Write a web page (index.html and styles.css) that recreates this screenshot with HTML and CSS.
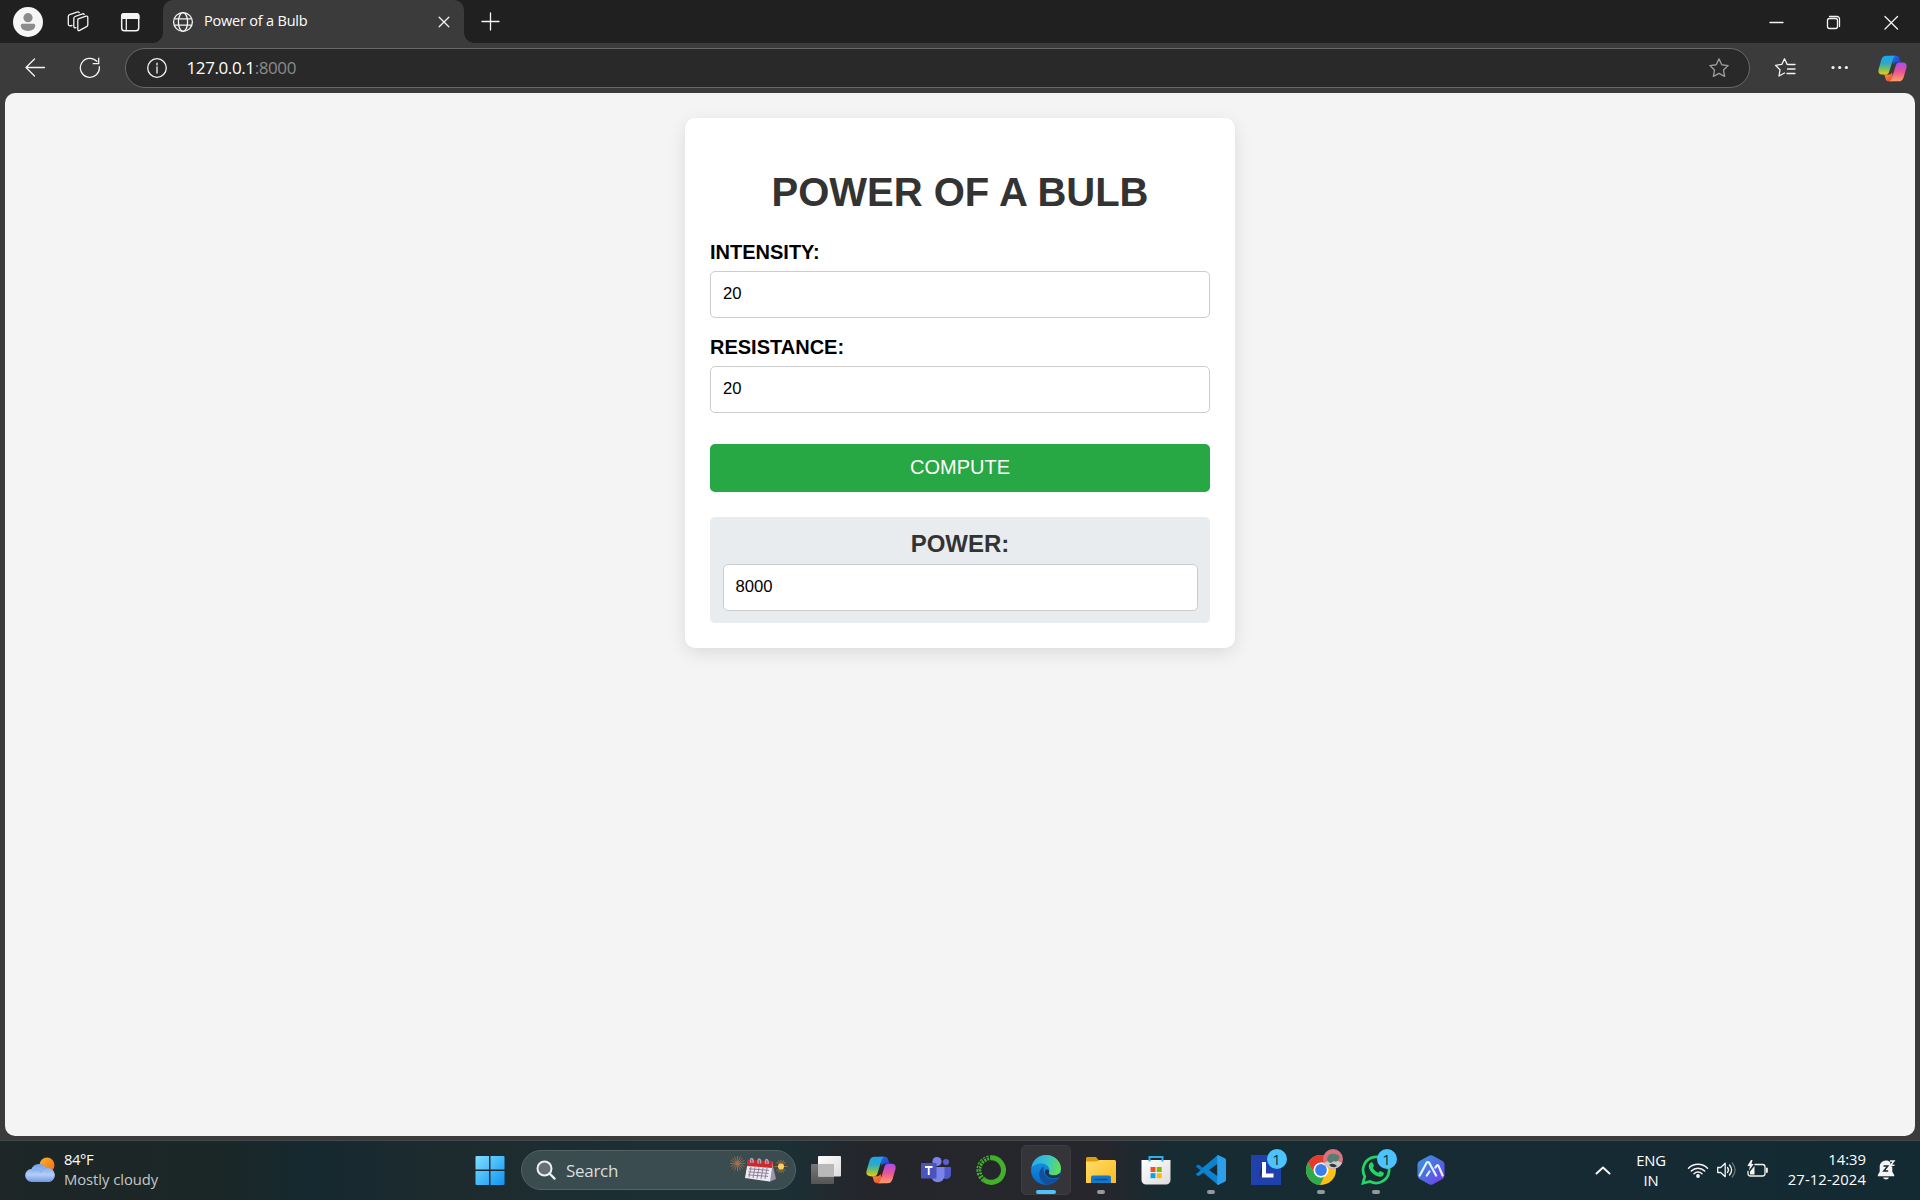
FILE: index.html
```html
<!DOCTYPE html>
<html lang="en">
<head>
<meta charset="utf-8">
<title>Power of a Bulb</title>
<link rel="stylesheet" href="styles.css">
</head>
<body>
<svg class="defs" width="0" height="0" aria-hidden="true">
  <defs>
    <linearGradient id="cpA" x1="0" y1="0" x2="0" y2="1"><stop offset="0" stop-color="#1ba5ee"/><stop offset=".4" stop-color="#2ba9c9"/><stop offset=".72" stop-color="#7cc15c"/><stop offset="1" stop-color="#f7c60d"/></linearGradient>
    <linearGradient id="cpB" x1="0" y1="0" x2="0" y2="1"><stop offset="0" stop-color="#a54cf0"/><stop offset=".5" stop-color="#ec5590"/><stop offset="1" stop-color="#fda069"/></linearGradient>
    <linearGradient id="cpC" x1="0" y1="0" x2="1" y2="1"><stop offset="0" stop-color="#2a6cf0"/><stop offset="1" stop-color="#123fc4"/></linearGradient>
    <linearGradient id="cpD" x1="0" y1="0" x2="1" y2="1"><stop offset="0" stop-color="#f9a03f"/><stop offset="1" stop-color="#e8442a"/></linearGradient>
    <symbol id="copilot" viewBox="0 0 30 28">
      <path d="M13.500 .7h5.200c2 0 3 1 3.500 2.700l.7 2.500c.3 1.200 1 1.900 2.100 1.900h-6.500c-1.500 0-2.400.8-2.900 2.400z" fill="url(#cpC)"/>
      <path d="M16.500 27.300h-5.200c-2 0-3-1-3.500-2.700l-.7-2.500c-.3-1.200-1-1.900-2.100-1.900h6.500c1.500 0 2.400-.8 2.900-2.400z" fill="url(#cpD)"/>
      <path d="M8.800.7h9.600c-1.600.4-2.300 1.700-2.900 3.600L11.600 17c-.7 2.200-1.700 3.200-3.900 3.200H4C1 20.200-.2 18 .6 14.800L3.400 5C4.200 2.200 5.800.7 8.800.7z" fill="url(#cpA)"/>
      <path d="M21.200 27.300h-9.600c1.600-.4 2.300-1.700 2.900-3.600L18.400 11c.7-2.200 1.700-3.200 3.900-3.200H26c3 0 4.200 2.200 3.400 5.400L26.600 23c-.8 2.800-2.400 4.300-5.400 4.300z" fill="url(#cpB)"/>
    </symbol>
    <linearGradient id="win" x1="0" y1="0" x2="1" y2="1"><stop offset="0" stop-color="#7fe0ff"/><stop offset="1" stop-color="#0c94f5"/></linearGradient>
    <linearGradient id="sun" x1="0" y1="0" x2="1" y2="1"><stop offset="0" stop-color="#f8b62b"/><stop offset="1" stop-color="#ef6a12"/></linearGradient>
    <linearGradient id="cloud" x1="0" y1="0" x2="0" y2="1"><stop offset="0" stop-color="#6f9eea"/><stop offset=".6" stop-color="#b4cdf8"/><stop offset="1" stop-color="#6d97e6"/></linearGradient>
    <linearGradient id="edgeA" x1="0" y1=".4" x2="1" y2=".6"><stop offset="0" stop-color="#2fa8e8"/><stop offset=".5" stop-color="#38c5cb"/><stop offset="1" stop-color="#66e04c"/></linearGradient>
    <linearGradient id="edgeB" x1="0" y1="0" x2="0" y2="1"><stop offset="0" stop-color="#1a9be6"/><stop offset="1" stop-color="#0668c8"/></linearGradient>
    <linearGradient id="folder" x1="0" y1="0" x2="1" y2="1"><stop offset="0" stop-color="#ffdc6b"/><stop offset="1" stop-color="#fcbb1d"/></linearGradient>
    <linearGradient id="hex" x1="0" y1="0" x2="1" y2="1"><stop offset="0" stop-color="#3d9bd8"/><stop offset=".5" stop-color="#4c6be4"/><stop offset="1" stop-color="#8037f0"/></linearGradient>
    <linearGradient id="paper" x1="0" y1="0" x2="1" y2="1"><stop offset="0" stop-color="#ffffff"/><stop offset="1" stop-color="#dcdcdc"/></linearGradient>
    <linearGradient id="grey" x1="0" y1="0" x2="0" y2="1"><stop offset="0" stop-color="#777"/><stop offset="1" stop-color="#555"/></linearGradient>
  </defs>
</svg>

<header class="tabbar">
  <svg class="avatar" width="30" height="30"><circle cx="15" cy="15" r="15" fill="#f6f6f6"/><circle cx="15" cy="10.700" r="4.600" fill="#8c8c8c"/><path d="M9.300 16.800h11.400a1.500 1.500 0 0 1 1.500 1.500c0 3.800-3 5.600-7.200 5.600s-7.200-1.800-7.200-5.600a1.500 1.500 0 0 1 1.500-1.500z" fill="#8c8c8c"/></svg>
  <svg class="workspaces line" width="22" height="22"><path d="M11.200 7.800 19 5.200q1.800-.5 1.800 1.300v7.200q0 1.300-1.200 1.900l-6.900 3.800q-1.900.9-1.900-1.100V9.300q0-1.100 .4-1.500z"/><path d="M9 16.700q-2.200.6-2.200-1.400V7.500q0-1.500 1.300-2L15.500 2.800q1.200-.3 1.700.7"/><path d="M5 14.500q-3.700 1-3.700-1.300V5.600q0-1.500 1.300-2L10 1.100q1.500-.5 2.200.5"/></svg>
  <svg class="tab-actions" width="22" height="22"><rect x="2.700" y="2.700" width="17" height="17" rx="2.800" fill="none" stroke="#f4f4f4" stroke-width="1.500"/><path d="M2 8V5a3 3 0 0 1 3-3h12.500a3 3 0 0 1 3 3v3z" fill="#f4f4f4"/><path d="M7.300 8v11.500" stroke="#f4f4f4" stroke-width="1.300"/></svg>
  <div class="tab">
    <svg class="line" width="22" height="22"><circle cx="11" cy="11" r="9.400"/><ellipse cx="11" cy="11" rx="4.600" ry="9.400"/><path d="M2.500 7.800h17M2.500 14.200h17"/></svg>
    <span class="tab-title">Power of a Bulb</span>
    <svg class="line tab-close" width="12" height="12"><path d="m1.200 1.200 9.600 9.600m0-9.600-9.600 9.600"/></svg>
  </div>
  <svg class="line new-tab" width="22" height="22"><path d="M10.500 2v17M2 10.500h17"/></svg>
  <div class="window-controls">
    <svg class="line" width="20" height="20"><path d="M4 10.500h13"/></svg>
    <svg class="line" width="20" height="20"><rect x="3.500" y="6.500" width="10" height="10" rx="2"/><path d="M5.500 4.500h7.500a2.500 2.500 0 0 1 2.500 2.500v7.500"/></svg>
    <svg class="line" width="20" height="20"><path d="m4 4.500 12.500 12.500m0-12.500L4 17"/></svg>
  </div>
</header>

<nav class="toolbar">
  <svg class="line back" width="22" height="22"><path d="M20.500 10.500H2M10.500 2 2 10.500l8.500 8.500"/></svg>
  <svg class="line refresh" width="22" height="22"><path d="M20.300 9.600A9.500 9.500 0 1 1 17.800 4.300M19.700 1.200v5.500h-5.500"/></svg>
  <div class="address">
    <svg class="line" width="22" height="22"><circle cx="11" cy="11" r="9.300"/><path d="M11 10v6M11 6.200v1.700"/></svg>
    <span class="url">127.0.0.1<span class="port">:8000</span></span>
    <svg class="star" width="22" height="22"><path d="m11 1.900 2.800 5.800 6.300.9-4.600 4.400 1.100 6.300-5.600-3-5.600 3 1.100-6.300-4.600-4.400 6.300-.9z"/></svg>
  </div>
  <svg class="line favorites" width="22" height="22"><path d="m14 7.500-.8-.1-2.700-5.600-2.700 5.600-6.300.9L6 12.800 5 19l5.500-3M14 7.500h7M13.500 12h7.500M13 16.500h8"/></svg>
  <svg class="more" width="22" height="22"><g fill="#f4f4f4"><circle cx="4" cy="10.500" r="1.600"/><circle cx="10.700" cy="10.500" r="1.600"/><circle cx="17.400" cy="10.500" r="1.600"/></g></svg>
  <svg class="copilot" width="29" height="27"><use href="#copilot"/></svg>
</nav>

<main class="page">
  <form class="card">
    <h1>POWER OF A BULB</h1>
    <label for="intensity">INTENSITY:</label>
    <input id="intensity" value="20">
    <label for="resistance">RESISTANCE:</label>
    <input id="resistance" value="20">
    <button type="button">COMPUTE</button>
    <section class="result">
      <h2>POWER:</h2>
      <input value="8000" aria-label="Power">
    </section>
  </form>
</main>

<footer class="taskbar">
  <div class="weather">
    <svg width="32" height="28"><circle cx="22" cy="9" r="7.500" fill="url(#sun)"/><path d="M7 26a6.500 6.500 0 0 1-.6-13A8 8 0 0 1 21 12.300 7 7 0 1 1 24.500 26z" fill="url(#cloud)"/><path d="M8 15q5-3 8 1 2-4 6-3.600" fill="none" stroke="#87adf0" stroke-width="1.200"/></svg>
    <div class="weather-text"><span class="temp">84°F</span><span class="sky">Mostly cloudy</span></div>
  </div>
  <div class="app"><svg width="30" height="30"><path d="M.500 2a1 1 0 0 1 1-1H14v13.500H.500zM15.500 1H28.500a1 1 0 0 1 1 1v12.500h-14zM.500 16H14v14H1.500a1 1 0 0 1-1-1zM15.500 16h14v13a1 1 0 0 1-1 1h-13z" fill="url(#win)"/></svg></div>
  <div class="search">
    <svg width="22" height="22"><circle cx="9.500" cy="9.500" r="7" fill="#647275" stroke="#eef1f1" stroke-width="2"/><path d="m14.600 14.600 5 5" stroke="#eef1f1" stroke-width="2.200" stroke-linecap="round"/></svg>
    <span>Search</span>
    <svg class="calendar" width="60" height="30">
      <path d="M8.500 1v15M1 8.500h15M3.200 3.200l10.600 10.600M13.800 3.200 3.200 13.800M5.500 1.500l6 14M11.500 1.500l-6 14M1.500 5.500l14 6M1.500 11.500l14-6" stroke="#ad7950" stroke-width=".7"/>
      <path d="m43 7 4 17-7 3z" fill="#9b93a9"/><path d="M19 5.500 44 7l-3 19.500L16 23z" fill="#eeeaf3"/><path d="M19 4.500 44 6.500l-1 6.500-25.500-2z" fill="#cd292b"/>
      <path d="M20 13.800l20 1.600M19.500 16.800l20 1.600M19 19.800l20 1.600M22 12l-2 10.500M26 12.200l-2 10.800M30 12.500l-2 11M34 12.800l-2 11M38 13l-2 11" stroke="#8b8499" stroke-width="1"/>
      <path d="M22 8c-2-6 3-6 2 0M29.500 8.500c-2-6 3-6 2 0M37 9c-2-6 3-6 2 0" fill="none" stroke="#b1a7bb" stroke-width="1.500"/>
      <path d="M52 5v13M45.500 11.500h13M47.500 7l9 9M56.500 7l-9 9M49.500 5.500l5 12M54.500 5.500l-5 12" stroke="#bd7a32" stroke-width=".8"/><circle cx="52" cy="11.500" r="3" fill="#ffd05b"/>
    </svg>
  </div>
  <div class="app"><svg width="30" height="30"><rect y="9" width="23" height="20" rx="1" fill="url(#grey)"/><rect x="7" y="1" width="23" height="20.500" rx="1" fill="url(#paper)"/><path d="M7 9h16v12.500H8a1 1 0 0 1-1-1z" fill="#b9b9b9"/></svg></div>
  <div class="app"><svg width="30" height="28"><use href="#copilot"/></svg></div>
  <div class="app"><svg width="30" height="30"><circle cx="25" cy="7" r="3" fill="#5b5fd0"/><path d="M21 12h8a1 1 0 0 1 1 1v6.500a5 5 0 0 1-9 2.500z" fill="#5059c9"/><circle cx="16" cy="6.500" r="4.600" fill="#7b83eb"/><path d="M10 12h13.500v8.500a6.700 6.700 0 0 1-13.500 0z" fill="#7b83eb"/><rect x="0" y="8" width="15.500" height="15.500" rx="1.200" fill="#4b53bc"/><path d="M4 12h7.500M7.750 12v8" stroke="#fff" stroke-width="1.900"/></svg></div>
  <div class="app"><svg width="30" height="30" fill="none" stroke="#43b02a"><path d="M15 2.700A12.300 12.300 0 1 1 8 25" stroke-width="5"/><path d="M8 25A12.300 12.300 0 0 1 15 2.700" stroke-width="5" stroke-dasharray="2.200 1.100"/><path d="M7 23.500A12 12 0 0 1 14 2" stroke="#25262c" stroke-width="1" stroke-dasharray="2 1.700"/></svg></div>
  <div class="app active"><svg width="30" height="30"><circle cx="15" cy="15" r="15" fill="url(#edgeB)"/><path d="M.5 13C1.500 5 8 0 15 0c9 0 15 6.500 15 13.500 0 4.500-3.500 7-7.500 7-3 0-5.500-1-4.900-2.400.4-1 .8-1.700.8-3.100 0-3.800-3.800-6.500-8.500-6.500C6 8.500 2 10.500.5 13z" fill="url(#edgeA)"/><path d="M13 11.800c-4 2-5.500 6-4.300 10 1.300 5 5 8.100 9 7.900 4.500-1 8.300-3.500 10.300-7-4 1.900-9.500 2-13-1.500-2.300-2.300-3.300-6-2-9.400z" fill="#124f9c"/><path d="M18 18.700c1.500 2.300 7 3 11.500-.7l-1 4c-4.500 2-9.700 1.700-12.500-1-2.300-2.200-2.800-5-1-6.500 1.800-.3 3.300.7 3.200 2 0 .8-.6 1.400-.2 2.200z" fill="#1b3556"/><path d="M18 18.700c2 2.300 7 2.800 11.500-.7l-.7 2.600c-4 1.800-8.800 1-10.800-1.900z" fill="#343439"/></svg><i class="dot"></i></div>
  <div class="app"><svg width="30" height="30"><path d="M0 12V3.500A1.500 1.500 0 0 1 1.500 2H10l3 3.500V12z" fill="#dd9c0b"/><path d="M0 6.500h10.500l3-1.500h15A1.500 1.500 0 0 1 30 6.500V28H0z" fill="url(#folder)"/><path d="M5 28v-5.500a2 2 0 0 1 2-2h16a2 2 0 0 1 2 2V28z" fill="#1477c7"/><path d="M9 24.500h12" stroke="#0c4f91" stroke-width="1.500" stroke-linecap="round"/></svg><i class="dot"></i></div>
  <div class="app"><svg width="30" height="30"><path d="M.5 5h29v20a4.500 4.500 0 0 1-4.500 4.500H5A4.500 4.500 0 0 1 .5 25z" fill="url(#paper)"/><path d="M8.500 6.500V2h13v4.500" fill="none" stroke="#2eaee6" stroke-width="2"/><path fill="#f25022" d="M9.500 12h5v5h-5z"/><path fill="#7fba00" d="M15.700 12h5v5h-5z"/><path fill="#00a4ef" d="M9.500 18.200h5v5h-5z"/><path fill="#ffb900" d="M15.700 18.200h5v5h-5z"/></svg></div>
  <div class="app"><svg width="30" height="30"><path d="M22 0 7.800 13.500 2.500 9.500.3 10.700q-.6.700 0 1.500L22 30l1-6.500z" fill="#0b75c2"/><path d="M22 0v8.500L2.500 21 .3 19.500q-.6-.8 0-1.500z" fill="#086db5"/><path d="m22 30-14-13.200-5.500 4.200-2.200-1.300q-.6-.8 0-1.500L22 0z" fill="#0d82cf"/><path d="M22 8.500V21.500l-9-6.500z" fill="#172b32"/><path d="M22 0l6.800 3.200q1.200.6 1.200 1.800v20q0 1.200-1.200 1.800L22 30q-.8-.5-.8-1.500v-27Q21.200.5 22 0z" fill="#2c9fe8"/><path d="m0 11.800 4.500 3.700L0 19z" fill="#172b32"/></svg><i class="dot"></i></div>
  <div class="app"><svg width="30" height="30"><path fill="#2040ac" d="M0 0h30v30H0z"/><path d="M8.500 22.500 11 7v11z" fill="#123144"/><path d="M13 7v13.500h9.500" fill="none" stroke="#fff" stroke-width="4"/></svg><b class="badge">1</b></div>
  <div class="app"><svg width="30" height="30"><circle cx="15" cy="15" r="15" fill="#fbc116"/><path d="M15 15 8.500 18.700 2 7.500A15 15 0 0 1 28 7.500H15z" fill="#e33b2e"/><path d="M2 7.500 8.500 18.700A7.500 7.500 0 0 0 18 22l-4 8A15 15 0 0 1 2 7.500z" fill="#2da94f"/><circle cx="15" cy="15" r="7.500" fill="#fff"/><circle cx="15" cy="15" r="5.900" fill="#3b7ded"/></svg><svg class="profile" width="20" height="20"><circle cx="10" cy="10" r="10" fill="#d8737d"/><path d="M1 14q9-6 18 0a10 10 0 0 1-18 0z" fill="#c9cbc9"/><path d="M4 10q1-6 8-5 6 1 4 5-2 4-5 2l-3 2q-3 0-4-4z" fill="#577d72"/><path d="M6 16q4-3 8 1-4 3-8-1z" fill="#31363b"/></svg><i class="dot"></i></div>
  <div class="app"><svg width="30" height="30"><path d="M2 28.200 3.800 21.400A13 13 0 1 1 8.900 26.400z" fill="none" stroke="#25d366" stroke-width="2.700"/><path d="M9.800 7.600c.8-.6 1.700-.4 2 .4l1.100 2.700c.2.700-.7 1.500-1.100 2.100 1.300 2.500 3.100 4.100 5.600 5 .8-.8 1.400-2 2.200-1.600l2.900 1.400c.9.600.2 2.600-.8 3.300-2.300 1.700-5.700.8-9.200-1.800-2.400-1.900-4.600-4.700-4.800-7.300-.1-1.800.8-3.100 2.100-4.200z" fill="#25d366"/></svg><b class="badge">1</b><i class="dot"></i></div>
  <div class="app"><svg width="30" height="30"><path d="M13 .7q2-1 4 0l9.500 5.400q2 1.200 2 3.300v11.200q0 2.100-2 3.300L17 29.300q-2 1-4 0l-9.500-5.400q-2-1.200-2-3.300V9.400q0-2.100 2-3.300z" fill="url(#hex)"/><path d="M3.700 20.500 10.500 8q1.400-2 2.800 0l6.800 12.500M10.800 20.500l2.700-4M19.300 12.600l1.500-2q1-1 1.800.5l4 9.400" fill="none" stroke="#e9f1ff" stroke-width="2.200" stroke-linecap="round" stroke-linejoin="round"/></svg></div>

  <div class="tray">
    <svg class="line chevron" width="16" height="12"><path d="m1.500 9.500 6.500-6 6.500 6" stroke-width="2"/></svg>
    <div class="lang"><span>ENG</span><span>IN</span></div>
    <svg class="line wifi" width="22" height="20"><path d="M1.500 8.200a13.500 13.500 0 0 1 19 0M4.300 11a9.500 9.500 0 0 1 13.400 0M7 13.700a5.700 5.700 0 0 1 8 0" stroke-width="1.500"/><circle cx="11" cy="16" r="1.900" fill="#f4f4f4" stroke="none"/></svg>
    <svg class="line volume" width="22" height="20"><path d="M1.700 7.500h3l4.500-4.200v13.400L4.700 12.500h-3z"/><path d="M11.500 7.500q2 2.500 0 5M13.500 5q4.200 5 0 10"/><path d="M16.200 3q5.800 7 0 14" stroke="#627279"/></svg>
    <svg class="line battery" width="22" height="20"><path d="M8 4.500h7.500A2.500 2.500 0 0 1 18 7v6.500a2.500 2.500 0 0 1-2.500 2.500h-12A2.500 2.500 0 0 1 1 13.500v-2"/><path d="M4 0 .3 6h2.500L2 10.500 6.700 4H4.500L5.500 0zM3 14.500V11.500L7.500 6v8.500zM19 7.800h1.800v4.900H19z" fill="#f4f4f4" stroke="none"/></svg>
    <div class="clock"><span>14:39</span><span class="date">27-12-2024</span></div>
    <svg class="bell" width="20" height="22"><path d="M9 1.500c-4 0-6.300 3-6.300 6.500v4.800L.8 16v1.300h16.400V16l-1.900-3.200V8c0-4-2.800-6.500-6.300-6.500zM6 18.500h6q-.7 2-3 2t-3-2z" fill="#f4f4f4"/><path d="M12.200 0H19v7.500h-4.700z" fill="#142a32"/><path d="M6.500 7h4.300l-4 5h4.400" fill="none" stroke="#142a32" stroke-width="1.500"/><path d="M13 2h4l-3.500 4.200h4" fill="none" stroke="#f4f4f4" stroke-width="1.400"/></svg>
  </div>
</footer>
</body>
</html>
```
FILE: styles.css
```css
* { box-sizing: border-box; }

body {
  margin: 0;
  width: 1920px;
  height: 1200px;
  display: flex;
  flex-direction: column;
  overflow: hidden;
  background: #3b3b3b;
  color: #fff;
  font-family: "Open Sans", "Noto Sans", sans-serif;
}

svg { display: block; flex: none; }
.defs { position: absolute; }

.line {
  fill: none;
  stroke: #f4f4f4;
  stroke-width: 1.3;
  stroke-linecap: round;
  stroke-linejoin: round;
}

/* Tab strip */
.tabbar {
  height: 43px;
  flex: none;
  display: flex;
  align-items: center;
  background: #202020;
}
.avatar { margin-left: 13px; }
.workspaces { margin-left: 23.500px; }
.tab-actions { margin-left: 30px; }
.tab {
  position: relative;
  width: 301px;
  height: 43px;
  margin-left: 22.500px;
  padding: 0 14px 0 9px;
  display: flex;
  align-items: center;
  background: #3b3b3b;
  border-radius: 10px 10px 0 0;
}
.tab::before,
.tab::after {
  content: "";
  position: absolute;
  bottom: 0;
  width: 10px;
  height: 10px;
}
.tab::before {
  left: -10px;
  background: radial-gradient(circle at 0 0, transparent 9.5px, #3b3b3b 10px);
}
.tab::after {
  right: -10px;
  background: radial-gradient(circle at 100% 0, transparent 9.5px, #3b3b3b 10px);
}
.tab-title {
  margin-left: 10px;
  padding-bottom: 2px;
  font-size: 14.5px;
  line-height: 20px;
  letter-spacing: -0.2px;
  white-space: nowrap;
}
.tab-close { margin-left: auto; }
.new-tab { margin-left: 16px; }
.window-controls {
  margin: 0 19px 0 auto;
  display: flex;
  gap: 37.500px;
}

/* Address row */
.toolbar {
  height: 50px;
  flex: none;
  display: flex;
  align-items: center;
}
.back { margin-left: 24px; }
.refresh { margin-left: 33px; }
.address {
  width: 1625px;
  height: 40px;
  margin-left: 24px;
  padding: 0 19px 0 20px;
  display: flex;
  align-items: center;
  background: #292929;
  border: 1px solid #686868;
  border-radius: 20px;
}
.url {
  margin-left: 18.500px;
  font-size: 17px;
  line-height: 24px;
  letter-spacing: -0.4px;
}
.port { color: #8b8b8b; }
.star {
  margin-left: auto;
  fill: none;
  stroke: #9a9a9a;
  stroke-width: 1.4;
  stroke-linejoin: round;
}
.favorites { margin-left: 24px; }
.more { margin-left: 33px; }
.copilot { margin-left: 27px; }

/* Web page */
.page {
  height: 1043px;
  flex: none;
  margin: 0 5px;
  padding-top: 25px;
  background: #f4f4f4;
  border-radius: 10px;
  font-family: "Liberation Sans", Arial, sans-serif;
}
.card {
  width: 550px;
  height: 530px;
  margin: 0 auto;
  padding: 25px;
  background: #fff;
  border-radius: 10px;
  box-shadow: 0 5px 18px rgba(0, 0, 0, 0.1);
}
h1 {
  margin: 26px 0 25px;
  font-size: 40px;
  line-height: 46px;
  text-align: center;
  color: #333;
}
label {
  display: block;
  height: 31px;
  font-size: 20px;
  font-weight: bold;
  line-height: 24px;
  color: #000;
}
.card input {
  display: block;
  width: 100%;
  height: 47px;
  margin: 0 0 17px;
  padding: 0 12px 1px;
  border: 1px solid #ccc;
  border-radius: 5px;
  background: #fff;
  color: #000;
  font: 16.67px "Liberation Sans", Arial, sans-serif;
}
button {
  display: block;
  width: 100%;
  height: 48px;
  margin: 31px 0 25px;
  padding: 0 0 2px;
  border: 0;
  border-radius: 5px;
  background: #28a745;
  color: #fff;
  font: 20px "Liberation Sans", Arial, sans-serif;
}
.result {
  height: 106px;
  padding: 12.500px;
  background: #e9ecef;
  border-radius: 5px;
}
.result h2 {
  margin: 0 0 6px;
  font-size: 24px;
  line-height: 28px;
  text-align: center;
  color: #333;
}

/* Taskbar */
.taskbar {
  height: 60px;
  flex: none;
  margin-top: 4px;
  padding-bottom: 1px;
  display: flex;
  align-items: center;
  border-top: 1px solid #41494b;
  background: linear-gradient(90deg, #1e2627 0, #1b2727 220px, #162930 310px, #1e2b2e 470px, #1b2f34 640px, #1b2f34 790px, #25262c 860px, #26262c 1100px, #172b32 1170px, #142a33 100%);
}
.weather {
  width: 462px;
  padding-left: 25px;
  display: flex;
  align-items: center;
}
.weather-text {
  margin-left: 7px;
  padding-bottom: 2px;
  display: flex;
  flex-direction: column;
  font-size: 14.800px;
  line-height: 20px;
}
.temp { letter-spacing: -0.4px; }
.sky { color: #c3c8c8; letter-spacing: -0.05px; }
.search {
  width: 275px;
  height: 40px;
  margin: 0 2.500px 0 4px;
  padding: 0 6px 0 13px;
  display: flex;
  align-items: center;
  background: #3a4c50;
  border: 1px solid #536266;
  border-radius: 20px;
  color: #d8dede;
  font-size: 17px;
  letter-spacing: -0.3px;
}
.search span { margin-left: 9px; }
.calendar { margin-left: auto; }
.app {
  position: relative;
  width: 55px;
  height: 50px;
  flex: none;
  display: flex;
  align-items: center;
  justify-content: center;
}
.active {
  width: 50px;
  margin: 0 2.500px;
  background: #343439;
  border: 1px solid #3c3c41;
  border-radius: 5px;
}
.dot {
  position: absolute;
  bottom: 1px;
  width: 8px;
  height: 4px;
  border-radius: 2px;
  background: #939a9e;
}
.active .dot {
  bottom: 0;
  width: 20px;
  background: #4cc2ff;
}
.badge {
  position: absolute;
  top: 4px;
  right: 7px;
  width: 20px;
  height: 20px;
  border-radius: 50%;
  background: #4cc2ff;
  color: #14303d;
  font-size: 15px;
  font-weight: 400;
  line-height: 20px;
  text-align: center;
}
.profile {
  position: absolute;
  top: 4px;
  right: 6px;
}
.tray {
  margin-left: auto;
  padding-right: 23px;
  display: flex;
  align-items: center;
  font-size: 14.800px;
  line-height: 20px;
}
.lang {
  width: 40px;
  margin-left: 20px;
  display: flex;
  flex-direction: column;
  align-items: center;
  letter-spacing: -0.2px;
}
.wifi { margin-left: 16px; }
.volume { margin-left: 7px; }
.battery { margin-left: 9px; }
.clock {
  width: 90px;
  margin: 0 11px 0 7px;
  padding-bottom: 2px;
  display: flex;
  flex-direction: column;
  align-items: flex-end;
}
.date { letter-spacing: 0.1px; }
```
